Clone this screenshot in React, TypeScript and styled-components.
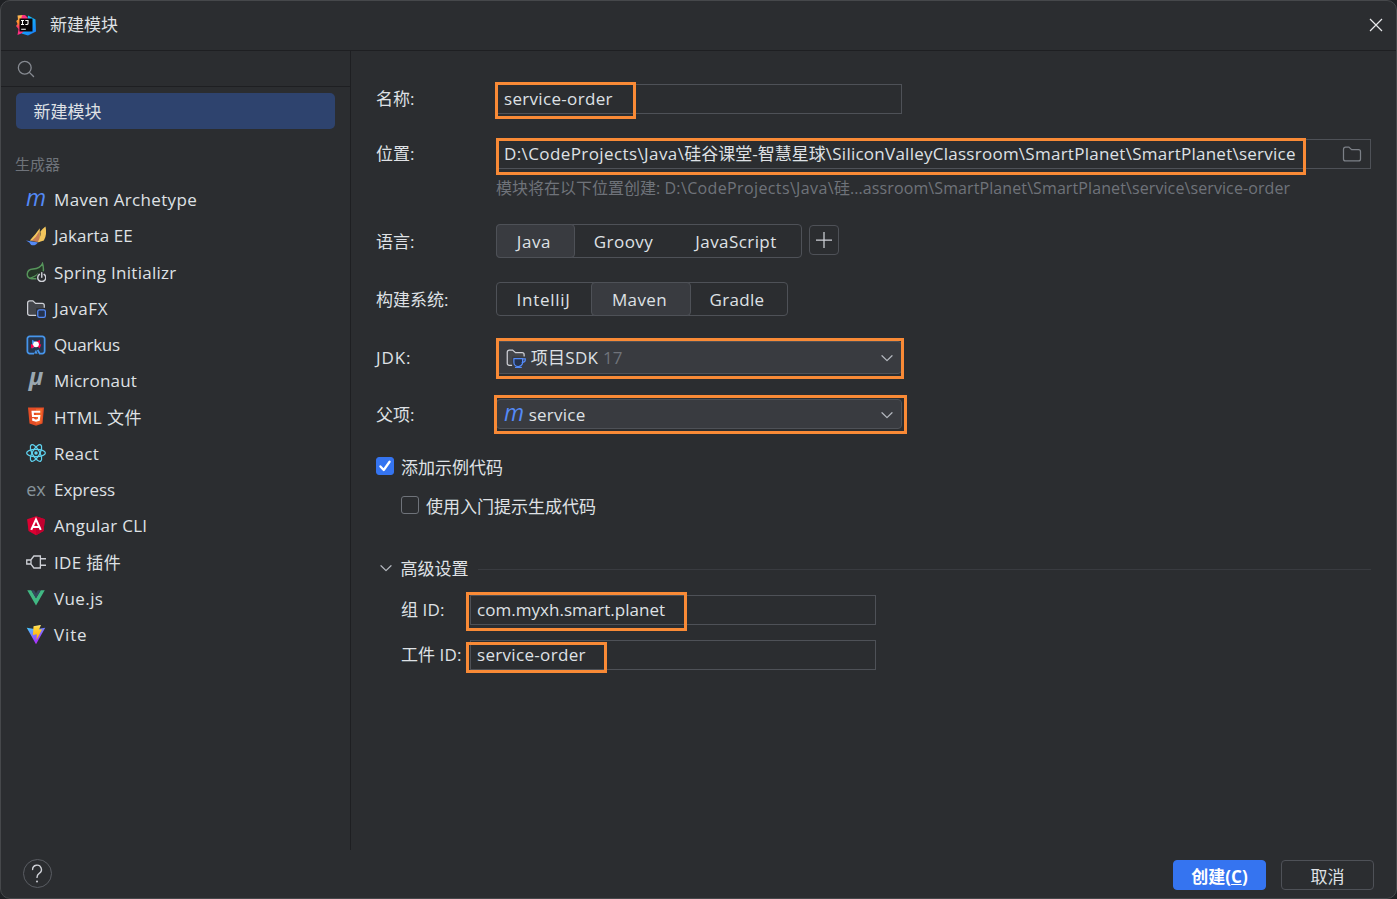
import React from "react";
import styled, { createGlobalStyle, css } from "styled-components";

const color = {
  bg: "#2b2d30",
  line: "#1e1f22",
  border: "#4e5157",
  frame: "#46484b",
  text: "#dfe1e5",
  muted: "#6f737a",
  icon: "#ced0d6",
  raised: "#393b40",
  selected: "#2e436e",
  primary: "#3574f0",
  blue: "#548af7",
  mark: "#f98a36",
};

const GlobalStyle = createGlobalStyle`
  *, *::before, *::after { box-sizing: border-box; }
  body {
    margin: 0;
    background: #1f2124;
    color: ${color.text};
    font: 400 17px/24px "Open Sans", "Noto Sans CJK SC", sans-serif;
    overflow: hidden;
  }
`;

const Dialog = styled.div`
  width: 1397px;
  height: 899px;
  display: flex;
  flex-direction: column;
  background: ${color.bg};
  border: 1px solid ${color.frame};
  border-radius: 10px;
  overflow: hidden;
`;

const TitleBar = styled.header`
  height: 50px;
  flex: none;
  display: flex;
  align-items: center;
  padding: 0 13px 2px 14px;
  border-bottom: 1px solid ${color.line};
`;

const Title = styled.h1`
  margin: 0 auto 0 13px;
  font: inherit;
`;

const Main = styled.div`
  height: 799px;
  flex: none;
  display: flex;
`;

const Sidebar = styled.aside`
  width: 350px;
  flex: none;
  border-right: 1px solid ${color.line};
`;

const Search = styled.div`
  height: 36px;
  display: flex;
  align-items: center;
  padding-left: 16px;
  border-bottom: 1px solid ${color.line};
`;

const SelectedItem = styled.div`
  height: 36px;
  margin: 6px 15px 0 15px;
  padding: 7px 0 0 17.5px;
  border-radius: 5px;
  background: ${color.selected};
`;

const GroupTitle = styled.div`
  margin: 23px 0 6px 14px;
  font-size: 15px;
  color: ${color.muted};
`;

const GeneratorList = styled.ul`
  list-style: none;
  margin: 0;
  padding: 0 0 0 25px;
`;

const Generator = styled.li`
  height: 36.25px;
  display: flex;
  align-items: center;
  gap: 8px;
  white-space: pre;

  svg { margin-top: -1px; }
`;

const Txt = styled.span<{ $track?: number }>`
  letter-spacing: ${(p) => p.$track ?? 0}px;
  white-space: pre;
`;

const Form = styled.section`
  flex: 1;
  padding: 31px 25px 0 25px;
`;

const Row = styled.div<{ $top?: number; $height: number; $indent?: boolean }>`
  display: flex;
  align-items: center;
  height: ${(p) => p.$height}px;
  margin-top: ${(p) => p.$top ?? 0}px;
  padding-left: ${(p) => (p.$indent ? 25 : 0)}px;
`;

const Label = styled.label<{ $width?: number; $drop?: boolean }>`
  width: ${(p) => p.$width ?? 120}px;
  flex: none;
  padding-top: ${(p) => (p.$drop ? 2 : 0)}px;
  white-space: pre;
`;

const Control = styled.div<{ $width: number }>`
  position: relative;
  width: ${(p) => p.$width}px;
  height: 30px;
  flex: none;
  display: flex;
  align-items: center;
  white-space: pre;
`;

const Field = styled(Control)<{ $pad?: number }>`
  padding: 0 8px 1px ${(p) => p.$pad ?? 7}px;
  border: 1px solid ${color.border};

  svg { margin-left: auto; }
`;

const Combo = styled(Control)<{ $tall?: boolean }>`
  height: ${(p) => (p.$tall ? 33 : 30)}px;
  padding: ${(p) => (p.$tall ? "2px 4px 0 9px" : "2px 4px 0 7px")};
  border: 1px solid ${color.border};
  border-radius: 4px;
  background: ${color.raised};

  svg:last-of-type { margin-left: auto; }
`;

/* Orange annotation frame laid over a control */
const Mark = styled.i<{ $l: number; $t: number; $w: number; $h: number }>`
  position: absolute;
  left: ${(p) => p.$l}px;
  top: ${(p) => p.$t}px;
  width: ${(p) => p.$w}px;
  height: ${(p) => p.$h}px;
  border: 3px solid ${color.mark};
  pointer-events: none;
`;

const Hint = styled.div`
  height: 24px;
  margin: 5px 0 0 120px;
  font-size: 16px;
  color: ${color.muted};
  white-space: pre;
`;

const Segments = styled.div<{ $width: number }>`
  width: ${(p) => p.$width}px;
  height: 34px;
  display: flex;
  border: 1px solid ${color.border};
  border-radius: 4px;
`;

const Segment = styled.button<{ $width: number; $active?: boolean }>`
  width: ${(p) => p.$width}px;
  height: 34px;
  margin: -1px 0 0 -1px;
  flex: none;
  padding: 1px 1px 0 0;
  border: 1px solid transparent;
  border-radius: 4px;
  background: none;
  color: inherit;
  font: inherit;
  ${(p) =>
    p.$active &&
    css`
      padding-right: 3px;
      border-color: ${color.border};
      background: ${color.raised};
    `}
`;

const AddButton = styled.button`
  width: 30px;
  height: 30px;
  margin: 0 0 2px 7px;
  padding: 0 1px 1px 0;
  display: grid;
  place-items: center;
  border: 1px solid ${color.border};
  border-radius: 4px;
  background: none;
`;

const CheckBox = styled.span<{ $on?: boolean }>`
  width: 18px;
  height: 18px;
  margin: 0 8px 2px -0.5px;
  flex: none;
  display: grid;
  place-items: center;
  border-radius: 3px;
  border: 1px solid ${(p) => (p.$on ? color.primary : "#6f737a")};
  background: ${(p) => (p.$on ? color.primary : "transparent")};
`;

const CheckLabel = styled.span`
  padding-top: 2px;
  margin-left: -0.5px;
`;

const Rule = styled.hr`
  flex: 1;
  height: 1px;
  margin: 2px 0 0 7px;
  border: 0;
  background: ${color.raised};
`;

const Muted = styled.span`
  color: ${color.muted};
`;

const Footer = styled.footer`
  flex: 1;
  display: flex;
  align-items: flex-start;
  padding: 10px 22px 0 22px;
`;

const Help = styled.button`
  width: 29px;
  height: 29px;
  margin: -1px auto 0 0;
  padding: 0 2px 0 0;
  border: 1px solid #5a5d63;
  border-radius: 50%;
  background: none;
  display: grid;
  place-items: center;
`;

const Button = styled.button<{ $primary?: boolean }>`
  width: 93px;
  height: 30px;
  margin-left: 15px;
  padding: 3px 0 0;
  line-height: 25px;
  border-radius: 4px;
  border: 1px solid ${(p) => (p.$primary ? color.primary : color.border)};
  background: ${(p) => (p.$primary ? color.primary : "transparent")};
  color: ${(p) => (p.$primary ? "#fff" : color.text)};
  font-family: inherit;
  font-size: 17px;
  font-weight: ${(p) => (p.$primary ? 700 : 400)};
`;

const Glyph = styled.span<{ $size: number; $color: string; $italic?: boolean; $bold?: boolean; $lift?: number }>`
  width: 20px;
  height: 20px;
  flex: none;
  display: flex;
  justify-content: center;
  font-size: ${(p) => p.$size}px;
  line-height: ${(p) => 20 - (p.$lift ?? 0)}px;
  font-style: ${(p) => (p.$italic ? "italic" : "normal")};
  font-weight: ${(p) => (p.$bold ? 700 : 400)};
  color: ${(p) => p.$color};
`;

const Icon = ({ children, size = 20, box = 16 }: { children: React.ReactNode; size?: number; box?: number }) => (
  <svg width={size} height={size} viewBox={`0 0 ${box} ${box}`} fill="none">
    {children}
  </svg>
);

const MavenIcon = () => (
  <Glyph $size={23} $color={color.blue} $italic $lift={5}>
    m
  </Glyph>
);

const IdeaLogo = () => (
  <svg width="22" height="22" viewBox="0 0 22 22">
    <defs>
      <linearGradient id="ijWarm" x1="0.3" y1="0" x2="0.3" y2="1">
        <stop offset="0" stopColor="#fdc05a" />
        <stop offset="0.4" stopColor="#ff8a2a" />
        <stop offset="0.6" stopColor="#fe3a6a" />
        <stop offset="1" stopColor="#fe2b8a" />
      </linearGradient>
      <linearGradient id="ijCool" x1="0" y1="0" x2="0.6" y2="1">
        <stop offset="0" stopColor="#10d0f8" />
        <stop offset="1" stopColor="#1a86fa" />
      </linearGradient>
    </defs>
    <path d="M2.5 1.5 8 1l5 4-3 13-7.5 3 1-6L1 12l1.5-2L1.200 7 3 5.500z" fill="url(#ijWarm)" />
    <path d="M7 1.200 10 1 12.500 3.500V8H5.500z" fill="#fe2f80" />
    <path d="M13 1.500 20.500 5.500 21 17.500 13 21.500 6.500 19.500 12 14z" fill="url(#ijCool)" />
    <rect x="4.500" y="4.500" width="13" height="13" fill="#0a0608" />
    <path d="M6 6.500h3M7.500 6.500v4M6 10.500h3M10.300 6.500h2.700v3q0 1-1.100 1h-1.500M6.200 15.200h4.600" stroke="#fff" strokeWidth="1.100" fill="none" />
  </svg>
);

const JakartaIcon = () => (
  <Icon>
    <path d="M11 1.800 11 12.500 3 11.600Q7.600 6.800 11 1.800Z" fill="#f2c55c" />
    <path d="M10.700 4.200v8.600L4.300 12Q8.400 8.900 10.700 4.200Z" fill="#c77d55" />
    <path d="M15.600.3Q17 7.400 14.300 11.600L9.200 13.200Q12.400 7.500 11.400 4.600 13.600 1.600 15.600.3Z" fill="#f2c55c" />
    <path d="M0 11.500 9.600 13.200 8 14.800Q6 15.900 4.100 15.200L2.700 13.100Z" fill="#548af7" />
  </Icon>
);

const SpringIcon = () => (
  <Icon>
    <path
      d="M8 13.400H4.600C2 13.400.9 11.600 1 9.600 1.200 7.200 3.200 5.700 5.600 5.600 9.300 5.400 12 4 13.200 1.200c.6 1.900.9 3.600.7 5.800"
      stroke="#57965c"
      strokeWidth="1.150"
      strokeLinecap="round"
      fill="#253627"
    />
    <path d="M2.800 13.100C6 11.800 8.600 11.200 10 9" stroke="#57965c" strokeWidth="1.050" />
    <circle cx="12.600" cy="12.300" r="4.300" fill={color.bg} />
    <path d="M10.700 9.900a3.200 3.200 0 1 0 3.800 0" stroke="#ced0d6" strokeWidth="1.150" strokeLinecap="round" />
    <path d="M12.600 8.600v3.600" stroke="#ced0d6" strokeWidth="1.150" strokeLinecap="round" />
  </Icon>
);

const JavaFxIcon = () => (
  <Icon>
    <path
      d="M8 13.900H2.900A1.600 1.600 0 0 1 1.300 12.300V3.900A1.600 1.600 0 0 1 2.900 2.300h2.600l2.200 2h5.300A1.600 1.600 0 0 1 14.600 5.900V7.400"
      fill="#43454a"
      stroke="#ced0d6"
      strokeLinecap="round"
    />
    <rect x="8.200" y="8.200" width="8" height="8" fill={color.bg} />
    <rect x="9.400" y="9.400" width="6.100" height="6.100" rx="1.300" fill="#25324d" stroke={color.blue} />
  </Icon>
);

const JdkIcon = () => (
  <Icon>
    <path d="M5 13.900H2.600A1.600 1.600 0 0 1 1 12.300V3.300A1.600 1.600 0 0 1 2.600 1.700h2.700l2.300 2h5.300A1.600 1.600 0 0 1 14.500 5.300V6.600" fill="#43454a" stroke="#ced0d6" strokeLinecap="round" />
    <path d="M4.900 6.900H16V16H4.900Z" fill={color.raised} />
    <path d="M6.300 8.400h7v2.900a3.500 3.500 0 0 1-7 0Z" fill="#25324d" stroke={color.blue} strokeLinejoin="round" />
    <path d="M13.300 8.600h2.100v1q0 1.700-2.400 1.900M7.600 15.500h4.600" stroke={color.blue} strokeLinecap="round" />
  </Icon>
);

const QuarkusIcon = () => (
  <Icon>
    <path
      d="M6.400 14.800H3A1.800 1.800 0 0 1 1.100 13V3A1.800 1.800 0 0 1 3 1.100h10A1.800 1.800 0 0 1 14.900 3v10a1.800 1.800 0 0 1-1.900 1.800h-2.100L9.300 12"
      fill="#26364d"
      stroke="#4695eb"
      strokeWidth="1.400"
    />
    <path d="M8 11.800 9.300 14.900 6.400 14.800Z" fill="#4695eb" />
    <path d="M4.800 3.700 8 5.600 4.800 7.400ZM11.200 7.200 8 9 4.800 10.800V7.200Z" fill="#4695eb" />
    <path d="M11.200 3.700 8 5.600l3.200 1.800ZM4 7.200v3.600L8 9ZM12.200 7.400 8 8l3 2.800Z" fill="#ff004a" />
    <circle cx="8" cy="7.400" r="2.300" fill="#fff" />
  </Icon>
);

const HtmlIcon = () => (
  <Icon>
    <path d="M1.600.3h12.800L13.200 13.200 8 14.900 2.800 13.200Z" fill="#e44d26" />
    <path d="M8 1.400h5.200l-1 11L8 13.700Z" fill="#f16529" />
    <path d="M11.400 3.800H5.300l.3 3.400h5l-.4 3.100L8 11l-2.200-.7-.1-1.300" stroke="#fff" strokeWidth="1.700" />
  </Icon>
);

const ReactIcon = () => (
  <Icon>
    <g stroke="#5fd3f0" strokeWidth="1">
      <ellipse cx="8" cy="8" rx="7.500" ry="2.900" />
      <ellipse cx="8" cy="8" rx="7.500" ry="2.900" transform="rotate(60 8 8)" />
      <ellipse cx="8" cy="8" rx="7.500" ry="2.900" transform="rotate(120 8 8)" />
    </g>
    <circle cx="8" cy="8" r="1.400" fill="#5fd3f0" />
  </Icon>
);

const AngularIcon = () => (
  <Icon>
    <path d="M8 .1 15.100 2.600l-1.100 9.400L8 15.300 2 12 .9 2.600Z" fill="#dd0031" />
    <path d="M8 .1 15.100 2.600l-1.100 9.400L8 15.300Z" fill="#c3002f" />
    <path d="M4.200 11.100 8 2.700l3.800 8.400M5.700 8.700h4.600" stroke="#fff" strokeWidth="1.600" />
  </Icon>
);

const PluginIcon = () => (
  <Icon>
    <path d="M4 6.200 6.300 3.200h5.200v9.600H6.300L4 9.800ZM3.800 6.400H.6v3.200h3.200M11.600 5.400H16M11.600 10.600H16" stroke="#ced0d6" strokeWidth="1.050" />
  </Icon>
);

const VueIcon = () => (
  <Icon>
    <path d="M1 1.800h3.200L8 8.200l3.800-6.400H15L8 13.900Z" fill="#41b883" />
    <path d="M4.200 1.800h2.300L8 4.300l1.500-2.500h2.300L8 8.200Z" fill="#35495e" />
  </Icon>
);

const ViteIcon = () => (
  <Icon>
    <defs>
      <linearGradient id="viteShield" x1="0" y1="0" x2="0.600" y2="1">
        <stop offset="0" stopColor="#41d1ff" />
        <stop offset="0.800" stopColor="#a03bfe" />
        <stop offset="1" stopColor="#bd34fe" />
      </linearGradient>
      <linearGradient id="viteBolt" x1="0" y1="0" x2="0" y2="1">
        <stop offset="0" stopColor="#ffea83" />
        <stop offset="0.200" stopColor="#ffd335" />
        <stop offset="1" stopColor="#ffa800" />
      </linearGradient>
    </defs>
    <path d="M.6 2.200 8 3.400l7.400-1.200L8 15.300Z" fill="url(#viteShield)" />
    <path d="M6 1 12 -.1 10.400 3.800l2.500-.4-4.500 8.600.3-4.700-3.200.6Z" fill="url(#viteBolt)" />
  </Icon>
);

const ChevronDown = () => (
  <Icon>
    <path d="m4 6.200 4 3.900 4-3.900" stroke="#b4b8bf" strokeLinecap="round" strokeLinejoin="round" />
  </Icon>
);

const SearchIcon = () => (
  <Icon size={18}>
    <circle cx="6.900" cy="6.900" r="5.700" stroke="#868a91" strokeWidth="1.150" />
    <path d="m11 11 3.700 3.700" stroke="#868a91" strokeWidth="1.200" strokeLinecap="round" />
  </Icon>
);

const generators: { name: string; track: number; icon: React.ReactNode }[] = [
  { name: "Maven Archetype", track: 0.34, icon: <MavenIcon /> },
  { name: "Jakarta EE", track: 0.05, icon: <JakartaIcon /> },
  { name: "Spring Initializr", track: 0.28, icon: <SpringIcon /> },
  { name: "JavaFX", track: 0.6, icon: <JavaFxIcon /> },
  { name: "Quarkus", track: -0.22, icon: <QuarkusIcon /> },
  { name: "Micronaut", track: 0.2, icon: <Glyph $size={24} $color="#9aa7b0" $italic $bold $lift={10}>μ</Glyph> },
  { name: "HTML 文件", track: 0.5, icon: <HtmlIcon /> },
  { name: "React", track: 0.25, icon: <ReactIcon /> },
  { name: "Express", track: -0.05, icon: <Glyph $size={18} $color="#87939a" $lift={2}>ex</Glyph> },
  { name: "Angular CLI", track: 0.28, icon: <AngularIcon /> },
  { name: "IDE 插件", track: 0.35, icon: <PluginIcon /> },
  { name: "Vue.js", track: 0.4, icon: <VueIcon /> },
  { name: "Vite", track: 0.85, icon: <ViteIcon /> },
];

export default function App() {
  return (
    <>
      <GlobalStyle />
      <Dialog>
        <TitleBar>
          <IdeaLogo />
          <Title>新建模块</Title>
          <svg width="14" height="14" viewBox="0 0 14 14">
            <path d="m1 1 12 12M13 1 1 13" stroke="#e8e9eb" strokeWidth="1.200" />
          </svg>
        </TitleBar>

        <Main>
          <Sidebar>
            <Search>
              <SearchIcon />
            </Search>
            <SelectedItem>新建模块</SelectedItem>
            <GroupTitle>生成器</GroupTitle>
            <GeneratorList>
              {generators.map((g) => (
                <Generator key={g.name}>
                  {g.icon}
                  <Txt $track={g.track}>{g.name}</Txt>
                </Generator>
              ))}
            </GeneratorList>
          </Sidebar>

          <Form>
            <Row $height={34}>
              <Label>名称:</Label>
              <Field $width={406}>
                <Txt $track={0.32}>service-order</Txt>
                <Mark $l={-2} $t={-3} $w={141} $h={37} />
              </Field>
            </Row>

            <Row $height={34} $top={21}>
              <Label>位置:</Label>
              <Field $width={875}>
                <Txt $track={0.4}>{"D:\\CodeProjects\\Java\\"}</Txt>
                <Txt>硅谷课堂-智慧星球</Txt>
                <Txt $track={0.255}>{"\\SiliconValleyClassroom\\SmartPlanet\\SmartPlanet\\service"}</Txt>
                <Icon>
                  <path d="M1.200 11.900V4.100A1.600 1.600 0 0 1 2.800 2.500h2.700l2.200 2h5.500A1.600 1.600 0 0 1 14.800 6.100v5.800a1.600 1.600 0 0 1-1.600 1.600H2.800a1.600 1.600 0 0 1-1.600-1.600Z" stroke="#7c8087" />
                </Icon>
                <Mark $l={-1} $t={-2} $w={810} $h={37} />
              </Field>
            </Row>
            <Hint>
              模块将在以下位置创建: <Txt $track={0.37}>{"D:\\CodeProjects\\Java\\"}</Txt>硅
              <Txt $track={0.1}>{"...assroom\\SmartPlanet\\SmartPlanet\\service\\service-order"}</Txt>
            </Hint>

            <Row $height={34} $top={24}>
              <Label $drop>语言:</Label>
              <Segments $width={306}>
                <Segment $width={79} $active>
                  <Txt $track={0.6}>Java</Txt>
                </Segment>
                <Segment $width={100}>
                  <Txt $track={0.45}>Groovy</Txt>
                </Segment>
                <Segment $width={127}>
                  <Txt $track={0.42}>JavaScript</Txt>
                </Segment>
              </Segments>
              <AddButton>
                <Icon>
                  <path d="M8 1.600v12.800M1.600 8h12.800" stroke={color.icon} />
                </Icon>
              </AddButton>
            </Row>

            <Row $height={34} $top={24}>
              <Label $drop>构建系统:</Label>
              <Segments $width={292}>
                <Segment $width={96}>
                  <Txt $track={0.7}>IntelliJ</Txt>
                </Segment>
                <Segment $width={100} $active>
                  <Txt $track={0.4}>Maven</Txt>
                </Segment>
                <Segment $width={95}>
                  <Txt $track={0.3}>Gradle</Txt>
                </Segment>
              </Segments>
            </Row>

            <Row $height={34} $top={24}>
              <Label $drop>
                <Txt $track={0.9}>JDK:</Txt>
              </Label>
              <Combo $width={406} $tall>
                <JdkIcon />
                <Txt $track={0.3}> 项目SDK </Txt>
                <Muted>17</Muted>
                <ChevronDown />
                <Mark $l={-1} $t={-4} $w={408} $h={41} />
              </Combo>
            </Row>

            <Row $height={34} $top={23}>
              <Label $drop>父项:</Label>
              <Combo $width={406}>
                <MavenIcon />
                <Txt $track={0.25}> service</Txt>
                <ChevronDown />
                <Mark $l={-3} $t={-5} $w={413} $h={39} />
              </Combo>
            </Row>

            <Row $height={24} $top={24}>
              <CheckBox $on>
                <Icon size={16} box={14}>
                  <path d="m3 7.400 2.900 3.100 5.100-7.200" stroke="#fff" strokeWidth="2" strokeLinecap="round" strokeLinejoin="round" />
                </Icon>
              </CheckBox>
              <CheckLabel>添加示例代码</CheckLabel>
            </Row>
            <Row $height={24} $top={15} $indent>
              <CheckBox />
              <CheckLabel>使用入门提示生成代码</CheckLabel>
            </Row>

            <Row $height={24} $top={38}>
              <ChevronDown />
              <Label as="span" $width={75} $drop> 高级设置</Label>
              <Rule />
            </Row>
            <Row $height={30} $top={15} $indent>
              <Label $width={69}>组 <Txt $track={0.3}>ID:</Txt></Label>
              <Field $width={406} $pad={6}>
                <Txt $track={0.03}>com.myxh.smart.planet</Txt>
                <Mark $l={-5} $t={-4} $w={221} $h={39} />
              </Field>
            </Row>
            <Row $height={30} $top={15} $indent>
              <Label $width={69}>工件 <Txt $track={0.3}>ID:</Txt></Label>
              <Field $width={406} $pad={6}>
                <Txt $track={0.32}>service-order</Txt>
                <Mark $l={-5} $t={1} $w={141} $h={31} />
              </Field>
            </Row>
          </Form>
        </Main>

        <Footer>
          <Help>
            <svg width="20" height="22" viewBox="0 0 20 22" fill="none">
              <path d="M5.600 6.600a4.400 4.400 0 1 1 6.600 3.800c-1.600 1-2.200 1.800-2.200 4" stroke="#ced0d6" strokeWidth="1.400" strokeLinecap="round" />
              <circle cx="10" cy="18.400" r="1" fill="#ced0d6" />
            </svg>
          </Help>
          <Button $primary>
            创建(<u>C</u>)
          </Button>
          <Button>取消</Button>
        </Footer>
      </Dialog>
    </>
  );
}
